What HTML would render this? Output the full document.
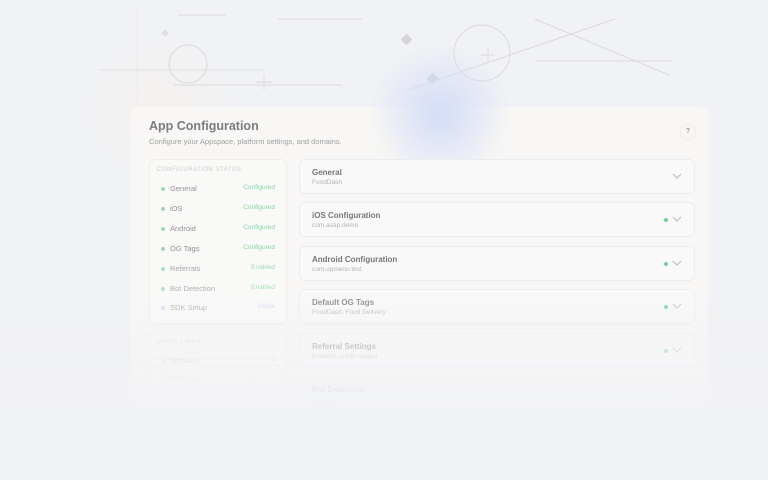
<!DOCTYPE html>
<html><head><meta charset="utf-8">
<style>
*{margin:0;padding:0;box-sizing:border-box}
body{width:768px;height:480px;overflow:hidden;background:#f1f2f5;font-family:"Liberation Sans",sans-serif;position:relative}
.abs{position:absolute}
.card{left:130px;top:107px;width:578px;height:300px;background:#f8f7f5;border-radius:8px}
.glow{left:370px;top:45px;width:140px;height:140px;border-radius:50%;background:radial-gradient(circle,rgba(205,215,248,.85) 0%,rgba(215,222,248,.5) 40%,rgba(230,235,250,0) 70%);filter:blur(4px)}
.warm{left:90px;top:30px;width:140px;height:160px;border-radius:50%;background:radial-gradient(circle,rgba(250,238,226,.4),rgba(250,240,230,0) 70%)}
h1{position:absolute;left:149px;top:119px;font-size:12.5px;font-weight:bold;color:#7c7c7c}
.sub{left:149px;top:137px;font-size:7.5px;color:#a0a0a0}
.panel{left:149px;top:159px;width:138px;height:165px;border:1px solid #efeeed;border-radius:6px;background:#f9f9f8}
.ph{left:157px;top:167px;font-size:6px;letter-spacing:.5px;color:#cdcdcd}
.row{position:absolute;left:161px;width:114px;font-size:7.5px;color:#929292}
.row .d{position:absolute;left:0;top:3px;width:4px;height:4px;border-radius:50%;background:#9fd9b3}
.row .n{position:absolute;left:9px;top:0}
.row .s{position:absolute;right:0;top:0;font-size:6.5px;color:#86d4a1}
.it{position:absolute;left:299px;width:396px;height:35px;border:1px solid #ececef;border-radius:6px;background:#f9f9fa}
.it .t{position:absolute;left:12px;top:8px;font-size:8px;font-weight:bold;color:#767676}
.it .u{position:absolute;left:12px;top:19px;font-size:6.5px;color:#b4b4b7}
.it .g{position:absolute;right:26px;top:15px;width:4px;height:4px;border-radius:50%;background:#72d196}
.it svg{position:absolute;right:12px;top:13px}
.fade{left:0;top:300px;width:768px;height:180px;background:linear-gradient(to bottom,rgba(241,242,245,0),rgba(241,242,245,.6) 40%,#f1f2f5 60%)}
.soft{filter:blur(.3px)}
</style></head><body>
<div class="abs warm"></div>
<svg class="abs" style="left:0;top:0" width="768" height="110" stroke="#dadade" stroke-width="1" fill="none">
<line x1="137" y1="8" x2="137" y2="108" stroke="#ebebef"/>
<line x1="178" y1="15" x2="226" y2="15"/>
<line x1="278" y1="19" x2="362" y2="19"/>
<circle cx="188" cy="64" r="19"/>
<line x1="100" y1="70" x2="263" y2="70" stroke="#e0e0e4"/>
<line x1="174" y1="85" x2="342" y2="85"/>
<line x1="256" y1="82" x2="272" y2="82"/><line x1="264" y1="74" x2="264" y2="90"/>
<rect x="163" y="31" width="4" height="4" transform="rotate(45 165 33)" fill="#e2e2e6" stroke="#dadade"/>
<rect x="403" y="36" width="7" height="7" transform="rotate(45 406.5 39.5)" fill="#d6d6da" stroke="#cfcfd3"/>
<rect x="429" y="75" width="7" height="7" transform="rotate(45 432.5 78.5)" fill="#d2d3d7" stroke="#cbcbcf"/>
<circle cx="482" cy="53" r="28"/>
<line x1="481" y1="55" x2="494" y2="55"/><line x1="488" y1="48" x2="488" y2="62"/>
<line x1="408" y1="90" x2="615" y2="19"/>
<line x1="535" y1="19" x2="669" y2="75"/>
<line x1="536" y1="61" x2="671" y2="61"/>
</svg>
<div class="abs card"></div>
<div class="abs glow"></div>
<div class="soft">
<h1>App Configuration</h1>
<div class="abs sub">Configure your Appspace, platform settings, and domains.</div>
<div class="abs" style="left:680px;top:124px;width:16px;height:16px;border-radius:50%;border:1px solid #eeece8;font-size:7px;font-weight:bold;color:#999;text-align:center;line-height:14px">?</div>
<div class="abs panel"></div>
<div class="abs ph">CONFIGURATION STATUS</div>
<div class="row" style="top:184px"><i class="d"></i><span class="n">General</span><span class="s">Configured</span></div>
<div class="row" style="top:204px"><i class="d"></i><span class="n">iOS</span><span class="s">Configured</span></div>
<div class="row" style="top:224px"><i class="d"></i><span class="n">Android</span><span class="s">Configured</span></div>
<div class="row" style="top:244px"><i class="d"></i><span class="n">OG Tags</span><span class="s">Configured</span></div>
<div class="row" style="top:264px;opacity:.8"><i class="d"></i><span class="n">Referrals</span><span class="s">Enabled</span></div>
<div class="row" style="top:284px;opacity:.7"><i class="d"></i><span class="n">Bot Detection</span><span class="s">Enabled</span></div>
<div class="row" style="top:303px;opacity:.6"><i class="d" style="background:#c3d0f2"></i><span class="n">SDK Setup</span><span class="s" style="color:#c3d0f2">Guide</span></div>
<div class="abs panel" style="top:332px;height:80px;opacity:.5"></div>
<div class="abs ph" style="top:339px;opacity:.5">QUICK LINKS</div>
<div class="row" style="top:356px;opacity:.3"><span class="n" style="left:0">◎ Domains</span><span class="s" style="color:#999">2</span></div>
<div class="row" style="top:374px;opacity:.2"><span class="n" style="left:0">⚿ API Keys</span></div>

<div class="it" style="top:159px"><div class="t">General</div><div class="u">FoodDash</div><svg width="10" height="6" viewBox="0 0 10 6"><path d="M1 1l4 4 4-4" stroke="#b8b8bc" fill="none"/></svg></div>
<div class="it" style="top:202px"><div class="t">iOS Configuration</div><div class="u">com.asap.demo</div><i class="g"></i><svg width="10" height="6" viewBox="0 0 10 6"><path d="M1 1l4 4 4-4" stroke="#b8b8bc" fill="none"/></svg></div>
<div class="it" style="top:246px"><div class="t">Android Configuration</div><div class="u">com.upmenu.test</div><i class="g"></i><svg width="10" height="6" viewBox="0 0 10 6"><path d="M1 1l4 4 4-4" stroke="#b8b8bc" fill="none"/></svg></div>
<div class="it" style="top:289px;opacity:.75"><div class="t">Default OG Tags</div><div class="u">FoodDash: Food Delivery</div><i class="g"></i><svg width="10" height="6" viewBox="0 0 10 6"><path d="M1 1l4 4 4-4" stroke="#b8b8bc" fill="none"/></svg></div>
<div class="it" style="top:333px;opacity:.55"><div class="t">Referral Settings</div><div class="u">Enabled, credit reward</div><i class="g"></i><svg width="10" height="6" viewBox="0 0 10 6"><path d="M1 1l4 4 4-4" stroke="#b8b8bc" fill="none"/></svg></div>
<div class="it" style="top:376px;opacity:.35"><div class="t">Bot Detection</div><div class="u">Disabled</div><i class="g" style="background:#bbb"></i><svg width="10" height="6" viewBox="0 0 10 6"><path d="M1 1l4 4 4-4" stroke="#b8b8bc" fill="none"/></svg></div>
</div>
<div class="abs fade"></div>
</body></html>
